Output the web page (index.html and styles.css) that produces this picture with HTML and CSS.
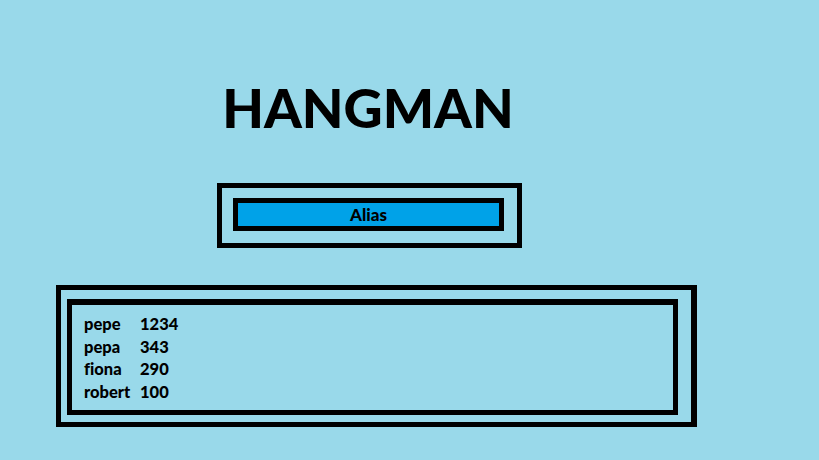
FILE: index.html
```html
<!DOCTYPE html>
<html>
<head>
<meta charset="utf-8">
<link rel="stylesheet" href="styles.css">
</head>
<body>
<div class="page">
  <div class="header">
    <h1 class="title">HANGMAN</h1>
    <div class="alias-frame">
      <div class="alias">Alias</div>
    </div>
  </div>
  <div class="scores-frame">
    <div class="scores">
      <div class="row"><span class="name">pepe</span><span class="pts">1234</span></div>
      <div class="row"><span class="name">pepa</span><span class="pts">343</span></div>
      <div class="row"><span class="name">fiona</span><span class="pts">290</span></div>
      <div class="row"><span class="name">robert</span><span class="pts">100</span></div>
    </div>
  </div>
</div>
</body>
</html>
```

FILE: styles.css
```css
html, body {
  margin: 0;
  padding: 0;
  background: #99d9ea;
}
body {
  font-family: Lato, "Open Sans", sans-serif;
  color: #000;
  width: 819px;
  height: 460px;
  overflow: hidden;
  font-variant-ligatures: none;
}
.page {
  display: flex;
  flex-direction: column;
  padding-top: 76px;
}
.header {
  width: 305px;
  margin-left: 217px;
  display: flex;
  flex-direction: column;
}
.title {
  margin: 0;
  font-size: 54px;
  line-height: 64px;
  font-weight: 900;
  text-align: center;
  padding-right: 3px;
}
.alias-frame {
  margin-top: 43px;
  border: 5px solid #000;
  height: 65px;
  box-sizing: border-box;
  padding: 10px 13px 12px 11px;
}
.alias {
  height: 100%;
  box-sizing: border-box;
  border: 5px solid #000;
  background: #00a2e8;
  display: flex;
  align-items: center;
  justify-content: center;
  font-weight: 900;
  font-size: 17px;
}
.scores-frame {
  margin-top: 37px;
  margin-left: 56px;
  width: 641px;
  height: 142px;
  box-sizing: border-box;
  border: 5px solid #000;
  border-right-width: 6px;
  padding: 9px 13px 7px 6px;
}
.scores {
  height: 100%;
  box-sizing: border-box;
  border: 5px solid #000;
  border-top-width: 6px;
  padding: 8px 0 0 12px;
  display: flex;
  flex-direction: column;
}
.row {
  display: grid;
  grid-template-columns: 56px auto;
  font-weight: 900;
  font-size: 16.5px;
  line-height: 22.5px;
}
```
